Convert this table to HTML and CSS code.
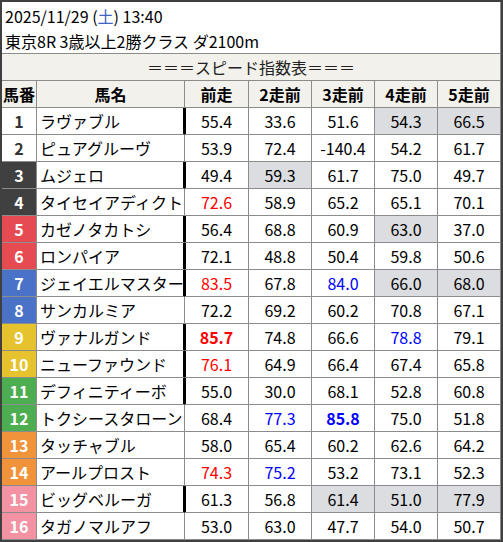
FILE: index.html
```html
<!DOCTYPE html>
<html lang="ja">
<head>
<meta charset="utf-8">
<title>スピード指数表</title>
<link rel="stylesheet" href="styles.css">
</head>
<body>
<div class="frame">
  <div class="info">
    <div>2025/11/29 (<span class="sat">土</span>) 13:40</div>
    <div>東京8R 3歳以上2勝クラス ダ2100m</div>
  </div>
  <div class="title">＝＝＝スピード指数表＝＝＝</div>
  <div class="row head">
    <div>馬番</div><div>馬名</div><div>前走</div><div>2走前</div><div>3走前</div><div>4走前</div><div>5走前</div>
  </div>
  <div class="row bar">
    <div class="no w1">1</div><div class="name">ラヴァブル</div><div class="prev">55.4</div><div>33.6</div><div>51.6</div><div class="g">54.3</div><div class="g">66.5</div>
  </div>
  <div class="row">
    <div class="no w1">2</div><div class="name">ピュアグルーヴ</div><div class="prev">53.9</div><div>72.4</div><div>-140.4</div><div>54.2</div><div>61.7</div>
  </div>
  <div class="row bar">
    <div class="no w2">3</div><div class="name">ムジェロ</div><div class="prev">49.4</div><div class="g">59.3</div><div>61.7</div><div>75.0</div><div>49.7</div>
  </div>
  <div class="row">
    <div class="no w2">4</div><div class="name">タイセイアディクト</div><div class="prev r">72.6</div><div>58.9</div><div>65.2</div><div>65.1</div><div>70.1</div>
  </div>
  <div class="row bar">
    <div class="no w3">5</div><div class="name">カゼノタカトシ</div><div class="prev">56.4</div><div>68.8</div><div>60.9</div><div class="g">63.0</div><div>37.0</div>
  </div>
  <div class="row bar">
    <div class="no w3">6</div><div class="name">ロンパイア</div><div class="prev">72.1</div><div>48.8</div><div>50.4</div><div>59.8</div><div>50.6</div>
  </div>
  <div class="row bar">
    <div class="no w4">7</div><div class="name">ジェイエルマスター</div><div class="prev r">83.5</div><div>67.8</div><div class="b">84.0</div><div class="g">66.0</div><div class="g">68.0</div>
  </div>
  <div class="row">
    <div class="no w4">8</div><div class="name">サンカルミア</div><div class="prev">72.2</div><div>69.2</div><div>60.2</div><div>70.8</div><div>67.1</div>
  </div>
  <div class="row bar">
    <div class="no w5">9</div><div class="name">ヴァナルガンド</div><div class="prev r bold">85.7</div><div>74.8</div><div>66.6</div><div class="b">78.8</div><div>79.1</div>
  </div>
  <div class="row bar">
    <div class="no w5">10</div><div class="name">ニューファウンド</div><div class="prev r">76.1</div><div>64.9</div><div>66.4</div><div>67.4</div><div>65.8</div>
  </div>
  <div class="row bar">
    <div class="no w6">11</div><div class="name">デフィニティーボ</div><div class="prev">55.0</div><div>30.0</div><div>68.1</div><div>52.8</div><div>60.8</div>
  </div>
  <div class="row">
    <div class="no w6">12</div><div class="name">トクシースタローン</div><div class="prev">68.4</div><div class="b">77.3</div><div class="b bold">85.8</div><div>75.0</div><div>51.8</div>
  </div>
  <div class="row">
    <div class="no w7">13</div><div class="name">タッチャブル</div><div class="prev">58.0</div><div>65.4</div><div>60.2</div><div>62.6</div><div>64.2</div>
  </div>
  <div class="row">
    <div class="no w7">14</div><div class="name">アールプロスト</div><div class="prev r">74.3</div><div class="b">75.2</div><div>53.2</div><div>73.1</div><div>52.3</div>
  </div>
  <div class="row bar">
    <div class="no w8">15</div><div class="name">ビッグベルーガ</div><div class="prev">61.3</div><div>56.8</div><div class="g">61.4</div><div class="g">51.0</div><div class="g">77.9</div>
  </div>
  <div class="row">
    <div class="no w8">16</div><div class="name">タガノマルアフ</div><div class="prev">53.0</div><div>63.0</div><div>47.7</div><div>54.0</div><div>50.7</div>
  </div>
</div>
</body>
</html>
```

FILE: styles.css
```css
* {
  box-sizing: border-box;
}

html, body {
  margin: 0;
  padding: 0;
  background: #fff;
}

body {
  font-family: "Noto Sans CJK JP", "Noto Sans", sans-serif;
  color: #000;
  font-size: 16px;
}

.frame {
  width: 503px;
  height: 542px;
  border: 2px solid #404040;
  overflow: hidden;
}

.info {
  height: 51px;
  padding: 2px 0 0 3px;
  line-height: 25px;
  border-right: 1px solid #8c8c8c;
  overflow: hidden;
  white-space: nowrap;
}

.sat {
  color: #3f63c4;
}

.title {
  height: 28px;
  border-top: 1px solid #8c8c8c;
  border-bottom: 1px solid #8c8c8c;
  border-right: 1px solid #8c8c8c;
  background: #f3f1ec;
  text-align: center;
  line-height: 26px;
  color: #222;
}

.row {
  display: grid;
  grid-template-columns: 35px 148px 64px 63px 63px 63px 63px;
  height: 27px;
}

.row > div {
  border-right: 1px solid #8c8c8c;
  border-bottom: 1px solid #8c8c8c;
  text-align: center;
  line-height: 26px;
  white-space: nowrap;
  overflow: hidden;
}

.head {
  background: #f3f1ec;
  font-weight: bold;
}

.row > .name {
  text-align: left;
  padding-left: 3px;
}

.no {
  font-weight: bold;
  color: #fff;
}

.w1 { background: #fff; color: #333; }
.w2 { background: #404040; }
.w3 { background: #e64b52; }
.w4 { background: #4a72c6; }
.w5 { background: #e6c32e; }
.w6 { background: #4cae50; }
.w7 { background: #f0933a; }
.w8 { background: #f292a3; }

.bar > .name {
  border-right-color: #000;
  box-shadow: inset -1px 0 0 #000;
}

.bar > .prev {
  box-shadow: inset 1px 0 0 #000;
}

.g { background: #dcdde1; }
.r { color: #ff0000; }
.b { color: #0000ff; }
.bold { font-weight: bold; }
```
